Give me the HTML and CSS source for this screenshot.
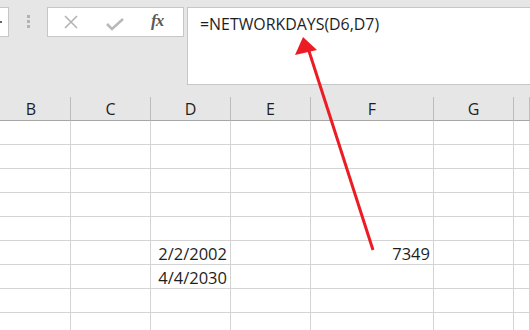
FILE: index.html
```
<!DOCTYPE html>
<html lang="en">
<head>
    <meta charset="UTF-8">
    <title>NETWORKDAYS</title>
    <link rel="stylesheet" href="styles.css">
</head>
<body>
<div class="toolbar">
    <div class="name-box"><span class="caret"></span></div>
    <div class="grip">
        <span></span><span></span><span></span>
    </div>
    <div class="buttons">
        <svg class="btn-icon" width="14" height="14" viewBox="0 0 14 14">
            <path d="M1 1 L13 13 M13 1 L1 13" stroke="#b4b4b4" stroke-width="1.6" fill="none"/>
        </svg>
        <svg class="btn-icon" width="18" height="14" viewBox="0 0 18 14">
            <path d="M1 7 L6 12 L17 2" stroke="#b9b9b9" stroke-width="2.6" fill="none"/>
        </svg>
        <span class="fx">fx</span>
    </div>
    <div class="formula">=NETWORKDAYS(D6,D7)</div>
</div>

<div class="sheet">
    <div class="head">B</div>
    <div class="head">C</div>
    <div class="head">D</div>
    <div class="head">E</div>
    <div class="head">F</div>
    <div class="head">G</div>
    <div class="head"></div>

    <div class="cell"></div><div class="cell"></div><div class="cell"></div><div class="cell"></div><div class="cell"></div><div class="cell"></div><div class="cell"></div>
    <div class="cell"></div><div class="cell"></div><div class="cell"></div><div class="cell"></div><div class="cell"></div><div class="cell"></div><div class="cell"></div>
    <div class="cell"></div><div class="cell"></div><div class="cell"></div><div class="cell"></div><div class="cell"></div><div class="cell"></div><div class="cell"></div>
    <div class="cell"></div><div class="cell"></div><div class="cell"></div><div class="cell"></div><div class="cell"></div><div class="cell"></div><div class="cell"></div>
    <div class="cell"></div><div class="cell"></div><div class="cell"></div><div class="cell"></div><div class="cell"></div><div class="cell"></div><div class="cell"></div>

    <div class="cell"></div><div class="cell"></div><div class="cell num">2/2/2002</div><div class="cell"></div><div class="cell num">7349</div><div class="cell"></div><div class="cell"></div>
    <div class="cell"></div><div class="cell"></div><div class="cell num">4/4/2030</div><div class="cell"></div><div class="cell"></div><div class="cell"></div><div class="cell"></div>

    <div class="cell"></div><div class="cell"></div><div class="cell"></div><div class="cell"></div><div class="cell"></div><div class="cell"></div><div class="cell"></div>
    <div class="cell"></div><div class="cell"></div><div class="cell"></div><div class="cell"></div><div class="cell"></div><div class="cell"></div><div class="cell"></div>
</div>

<!-- annotation arrow drawn over the sheet -->
<svg class="arrow" width="530" height="330" viewBox="0 0 530 330">
    <line x1="373" y1="250" x2="308" y2="48" stroke="#ec1c24" stroke-width="3"/>
    <polygon points="303,37 295,55 317,50" fill="#ec1c24"/>
</svg>
</body>
</html>
```

FILE: styles.css
```
:root {
    --chrome: #e6e6e6;
    --edge: #c6c6c6;
    --grid: #d4d4d4;
    --text: #1e1e1e;
}

body {
    margin: 0;
    width: 530px;
    height: 330px;
    overflow: hidden;
    background: var(--chrome);
    font-family: "Open Sans", "Noto Sans", sans-serif;
    color: var(--text);
    position: relative;
}

.toolbar {
    display: flex;
    align-items: flex-start;
    height: 97px;
    padding-top: 7px;
    box-sizing: border-box;
}

.name-box {
    width: 9px;
    height: 30px;
    box-sizing: border-box;
    background: white;
    border: 1px solid var(--edge);
    border-left: none;
    position: relative;
}

.name-box .caret {
    position: absolute;
    left: 0;
    top: 13px;
    width: 2px;
    height: 2px;
    background: #666;
}

.grip {
    display: flex;
    flex-direction: column;
    gap: 2px;
    margin: 8px 17px 0 18px;
}

.grip span {
    width: 3px;
    height: 3px;
    background: #b3b3b3;
}

.buttons {
    width: 137px;
    height: 30px;
    box-sizing: border-box;
    background: white;
    border: 1px solid var(--edge);
    display: flex;
    align-items: center;
    padding-left: 16px;
}

.btn-icon {
    margin-right: 28px;
}

.btn-icon + .btn-icon {
    margin-right: 27px;
    margin-top: 3px;
}

.fx {
    font-family: "Liberation Serif", serif;
    font-style: italic;
    font-weight: bold;
    font-size: 17px;
    color: #5a5a5a;
    letter-spacing: -1px;
    margin-top: -3px;
}

.formula {
    flex: 1;
    margin-left: 3px;
    height: 78px;
    box-sizing: border-box;
    background: white;
    border: 1px solid var(--edge);
    border-right: none;
    padding: 5px 0 0 12px;
    font-size: 15.9px;
    line-height: 22px;
}

.sheet {
    display: grid;
    grid-template-columns: 79px 80px 80px 80px 123px 80px 1fr;
    grid-auto-rows: 24px;
    margin-left: -8px;
    background: white;
}

.head {
    background: var(--chrome);
    border-right: 1px solid #bcbcbc;
    border-bottom: 1px solid #a6a6a6;
    text-align: center;
    font-size: 16px;
    line-height: 24px;
}

.cell {
    border-right: 1px solid var(--grid);
    border-bottom: 1px solid var(--grid);
    font-size: 16.5px;
    line-height: 26px;
}

.num {
    text-align: right;
    padding-right: 3px;
}

.arrow {
    position: absolute;
    left: 0;
    top: 0;
}
```
